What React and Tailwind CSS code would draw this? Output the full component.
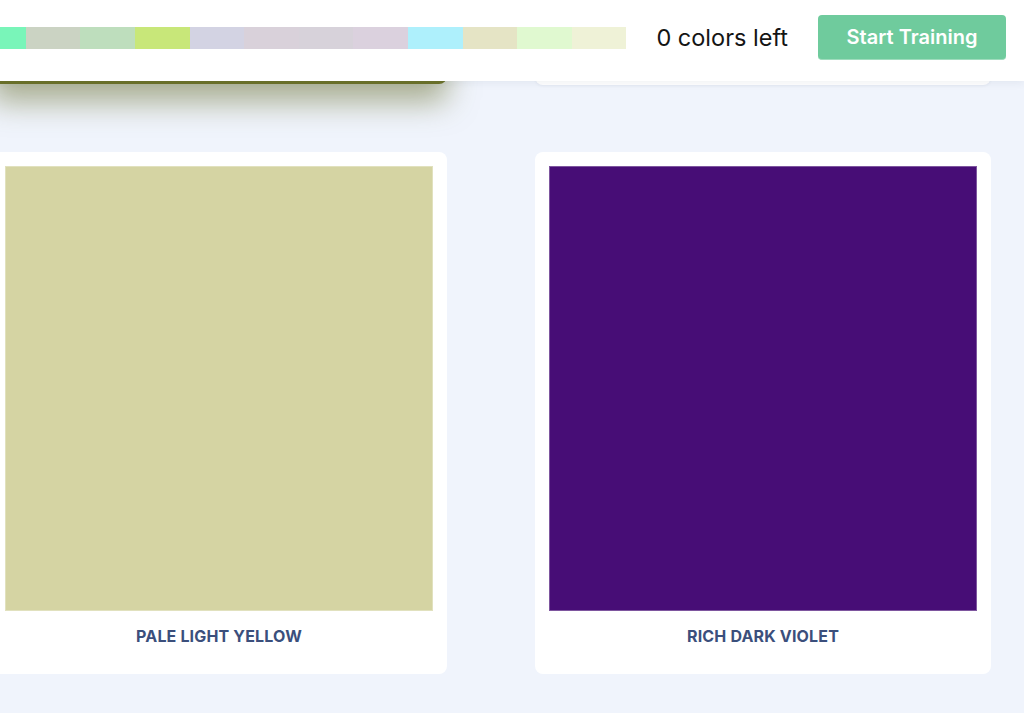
import React from "react";

const strip = [
    "#79f5b9", "#cbd3c3", "#bedebd", "#c8e779", "#d3d3e3", "#d9d1da",
    "#d7d2da", "#dbd1de", "#aef0fc", "#e5e4c5", "#e0f9d0", "#eff2d7",
];

const Card = ({ color, name }) => (
    <div className="w-[456px] shrink-0 bg-white rounded-lg px-[14px] pt-[14px]">
        <div className="h-[445px] border border-white/30" style={{ backgroundColor: color }} />
        <div className="pt-[16px] pb-[29px] text-center text-[16px] leading-[18px] font-bold uppercase tracking-[0.01em] text-[#3b4f7c]">
            {name}
        </div>
    </div>
);

export default function App() {
    return (
        <div className="relative h-[713px] overflow-hidden bg-[#f0f4fc]" style={{ fontFamily: "Inter, 'Open Sans', sans-serif" }}>
            {/* fixed header */}
            <header className="absolute top-0 left-0 right-0 z-10 h-[81px] bg-white shadow-[0_2px_8px_rgba(40,50,90,0.07)] flex items-center justify-end overflow-hidden pr-[18px]">
                <div className="flex shrink-0 h-[22px] mb-[6px]">
                    {strip.map((c, i) => (
                        <div key={i} className="w-[54.6px] h-full shrink-0" style={{ backgroundColor: c }} />
                    ))}
                </div>
                <span className="ml-[30px] mb-[5px] shrink-0 text-[23.5px] text-[#141414]">0 colors left</span>
                <button className="ml-[30px] mb-[6px] shrink-0 w-[188px] h-[45px] rounded-[4px] bg-[#6fcb9d] border-b border-[#9fdcbd] text-white text-[20px] font-semibold">
                    Start Training
                </button>
            </header>

            {/* scrolled card grid */}
            <div className="flex flex-col gap-[67px] ml-[-9px] mt-[-438px]">
                <div className="flex gap-[88px]">
                    <div className="w-[456px] h-[522px] shrink-0 rounded-lg bg-white border-b-[3px] border-[#6b7128] shadow-[0_18px_30px_rgba(100,105,40,0.5)]" />
                    <div className="w-[456px] h-[523px] shrink-0 rounded-lg bg-white shadow-[0_1px_3px_rgba(40,50,90,0.06)]" />
                </div>
                <div className="flex gap-[88px]">
                    <Card color="#d5d4a3" name="Pale Light Yellow" />
                    <Card color="#470d76" name="Rich Dark Violet" />
                </div>
            </div>
        </div>
    );
}
